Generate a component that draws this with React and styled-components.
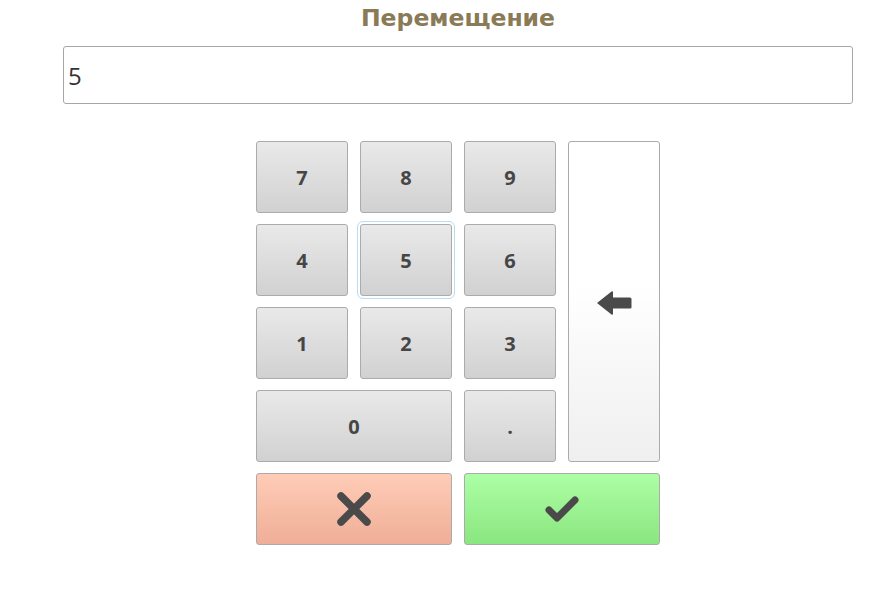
import styled, { createGlobalStyle, css } from "styled-components"

const GlobalStyle = createGlobalStyle`
	html, body {
		margin: 0;
		padding: 0;
		background: #fff;
	}
	body {
		font-family: "Open Sans", "Liberation Sans", sans-serif;
	}
`

const keys = [
	{ label: "7" },
	{ label: "8" },
	{ label: "9" },
	{ label: "back" },
	{ label: "4" },
	{ label: "5", focused: true },
	{ label: "6" },
	{ label: "1" },
	{ label: "2" },
	{ label: "3" },
	{ label: "0", wide: true },
	{ label: "." },
]

export default function App() {
	return (
		<Page>
			<GlobalStyle />
			<Title>Перемещение</Title>
			<Field value="5" readOnly />
			<Pad>
				{keys.map(key =>
					key.label === "back" ? (
						<BackKey key="back">
							<svg width="36" height="26" viewBox="0 0 36 26">
								<path
									d="M1 13 L15.5 1.5 Q17 0.5 17 2.5 L17 7.5 L34 7.5 Q35.5 7.5 35.5 9 L35.5 17.5 Q35.5 18.5 34 18.5 L17 18.5 L17 23.5 Q17 25.5 15.5 24.5 Z"
									fill="#4a4a4a"
								/>
							</svg>
						</BackKey>
					) : (
						<Key key={key.label} $wide={key.wide} $focused={key.focused}>
							{key.label}
						</Key>
					)
				)}
				<Key $wide $tone="cancel">
					<svg width="36" height="36" viewBox="0 0 36 36">
						<path
							d="M5 5 L31 31 M31 5 L5 31"
							stroke="#4a4a4a"
							strokeWidth="7.5"
							strokeLinecap="round"
						/>
					</svg>
				</Key>
				<Key $wide $tone="ok">
					<svg width="36" height="28" viewBox="0 0 36 28">
						<path
							d="M5 15 L13 23 L31 5"
							stroke="#4a4a4a"
							strokeWidth="7"
							strokeLinecap="round"
							strokeLinejoin="round"
							fill="none"
						/>
					</svg>
				</Key>
			</Pad>
		</Page>
	)
}

const Page = styled.div`
	width: 790px;
	margin-left: 63px;
	display: flex;
	flex-direction: column;
	align-items: center;
`

const Title = styled.h1`
	margin: 2px 0 0;
	height: 44px;
	font-family: "DejaVu Sans", Verdana, sans-serif;
	font-size: 23.5px;
	font-weight: bold;
	color: #8a7a56;
	line-height: 32px;
`

const Field = styled.input`
	box-sizing: border-box;
	width: 790px;
	height: 58px;
	border: 1px solid #a6a6a6;
	border-radius: 3px;
	padding: 0 4px;
	font-family: "Open Sans", sans-serif;
	font-size: 24px;
	color: #333;
	outline: none;
	margin-bottom: 37px;
`

const Pad = styled.div`
	display: grid;
	grid-template-columns: repeat(4, 92px);
	grid-auto-rows: 72px;
	column-gap: 12px;
	row-gap: 11px;
`

const tones = {
	cancel: css`
		background: linear-gradient(#ffccb7, #efae97);
	`,
	ok: css`
		background: linear-gradient(#adffa5, #8ae67f);
	`,
}

const Key = styled.button`
	box-sizing: border-box;
	grid-column: ${p => (p.$wide ? "span 2" : "auto")};
	display: flex;
	align-items: center;
	justify-content: center;
	border: 1px solid #ababab;
	border-radius: 3px;
	background: linear-gradient(#e9e9e9, #d1d1d1);
	font-family: "Open Sans", sans-serif;
	font-size: 20px;
	font-weight: bold;
	color: #464646;
	padding: 0;
	${p => p.$focused && css`
		outline: 1px solid #b9dcf5;
		outline-offset: 2px;
	`}
	${p => tones[p.$tone]}
`

const BackKey = styled.button`
	box-sizing: border-box;
	grid-column: 4;
	grid-row: 1 / span 4;
	display: flex;
	align-items: center;
	justify-content: center;
	border: 1px solid #ababab;
	border-radius: 3px;
	background: linear-gradient(#ffffff 45%, #efefef);
	padding: 0;
	padding-top: 2px;
`
